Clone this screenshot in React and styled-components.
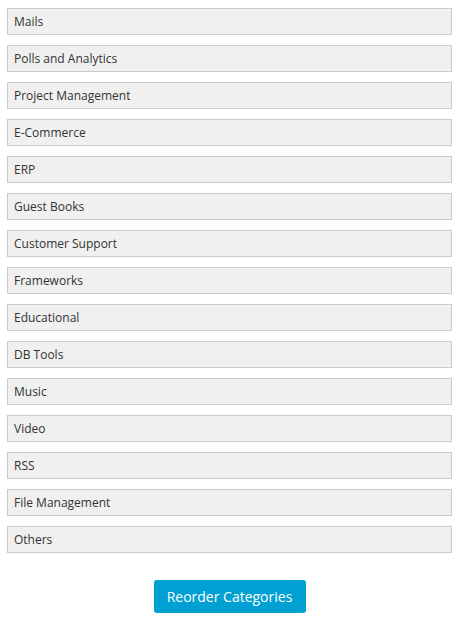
import React from "react";
import styled, { createGlobalStyle } from "styled-components";

const categories = [
  "Mails",
  "Polls and Analytics",
  "Project Management",
  "E-Commerce",
  "ERP",
  "Guest Books",
  "Customer Support",
  "Frameworks",
  "Educational",
  "DB Tools",
  "Music",
  "Video",
  "RSS",
  "File Management",
  "Others",
];

export default function App() {
  return (
    <>
      <GlobalStyle />
      <Page>
        <List>
          {categories.map((name) => (
            <Row key={name}>{name}</Row>
          ))}
        </List>
        <Actions>
          <Button>Reorder Categories</Button>
        </Actions>
      </Page>
    </>
  );
}

const GlobalStyle = createGlobalStyle`
  body {
    margin: 0;
    background: #ffffff;
    font-family: "Open Sans", "Liberation Sans", sans-serif;
  }
`;

const Page = styled.div`
  padding: 8px 10px 0 7px;
`;

const List = styled.div`
  display: flex;
  flex-direction: column;
  gap: 10px;
`;

const Row = styled.div`
  height: 25px;
  line-height: 25px;
  padding: 0 6px;
  background: #eff0ef;
  border: 1px solid #cbcbcb;
  color: #333333;
  font-size: 12px;
`;

const Actions = styled.div`
  display: flex;
  justify-content: center;
  padding-top: 27px;
`;

const Button = styled.button`
  width: 152px;
  height: 33px;
  border: none;
  border-radius: 3px;
  background: #00a0d2;
  color: #ffffff;
  font-family: "Open Sans", "Liberation Sans", sans-serif;
  font-size: 14px;
  cursor: pointer;
`;
